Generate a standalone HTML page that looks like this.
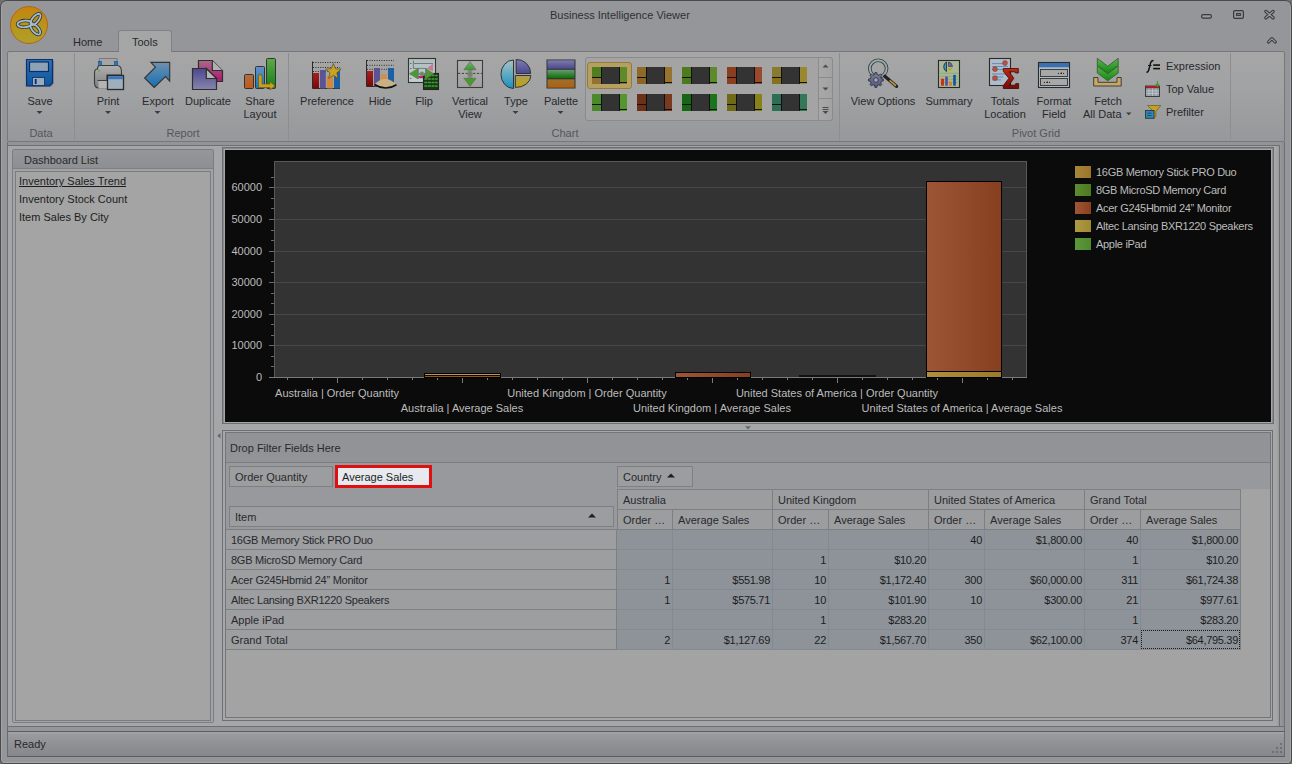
<!DOCTYPE html>
<html><head><meta charset="utf-8">
<style>
*{box-sizing:border-box;margin:0;padding:0}
html,body{width:1292px;height:764px;overflow:hidden;background:#707070}
body{font-family:"Liberation Sans",sans-serif;font-size:11px;color:#28292d;position:relative}
.a{position:absolute}
.t{position:absolute;white-space:nowrap;line-height:12px}
.c{text-align:center}
.r{text-align:right}
.lbl{color:#55565c}
svg{position:absolute;overflow:visible}
.ch{font-size:11px;color:#c9c9c9}
text.cf{font-family:"Liberation Sans",sans-serif;font-size:11px;fill:#bcbcbc}
text.lg{letter-spacing:-0.3px}
.cell{position:absolute;height:20px;line-height:19px;white-space:nowrap;overflow:hidden}
</style></head><body>
<!-- window frame -->
<div class="a" style="left:0;top:0;width:1292px;height:764px;background:#959699;border:1px solid #48494b;border-radius:7px 7px 4px 4px;box-shadow:inset 1px 0 0 #a3a4a6,inset -1px 0 0 #a3a4a6"></div>
<!-- title -->
<div class="t" style="left:550px;top:9px;color:#2f3033">Business Intelligence Viewer</div>
<!-- window buttons -->
<svg style="left:1195px;top:4px" width="90" height="46">
 <rect x="6.6" y="10.6" width="9.8" height="3.6" rx="1.6" fill="#9c9c9e" stroke="#38393c" stroke-width="1.2"/>
 <rect x="38.6" y="6.6" width="9.8" height="7.8" rx="1.3" fill="none" stroke="#38393c" stroke-width="1.2"/>
 <rect x="41.6" y="9.6" width="3.8" height="1.8" fill="none" stroke="#38393c" stroke-width="1.1"/>
 <path d="M71 7.5 L78 13.8 M78 7.5 L71 13.8" stroke="#38393c" stroke-width="3.4" stroke-linecap="round"/>
 <path d="M71 7.5 L78 13.8 M78 7.5 L71 13.8" stroke="#9c9c9e" stroke-width="1.2" stroke-linecap="round"/>
 <path d="M73.6 38 L76.9 34.6 L80.2 38" fill="none" stroke="#38393c" stroke-width="3.2" stroke-linecap="round" stroke-linejoin="round"/>
 <path d="M73.6 38 L76.9 34.6 L80.2 38" fill="none" stroke="#9c9c9e" stroke-width="1.1" stroke-linecap="round" stroke-linejoin="round"/>
</svg>
<!-- logo -->
<div class="a" style="left:10px;top:6px;width:38px;height:38px;border-radius:50%;background:linear-gradient(#c2850e,#b8961a 55%,#aea02c);border:1px solid #b8621a"></div>
<svg style="left:10px;top:6px" width="38" height="38">
 <g transform="translate(21.5 18.5) scale(0.86) translate(-20.5 -17.5)"><g fill="none" stroke="#27313c" stroke-width="4">
  <ellipse cx="12.6" cy="16.8" rx="8.4" ry="3.9" transform="rotate(-4 12.6 16.8)"/>
  <ellipse cx="25.2" cy="11.6" rx="8" ry="3.6" transform="rotate(-50 25.2 11.6)"/>
  <ellipse cx="25" cy="23" rx="7.6" ry="3.6" transform="rotate(48 25 23)"/>
 </g>
 <g fill="none" stroke="#a6bccb" stroke-width="2.1">
  <ellipse cx="12.6" cy="16.8" rx="8.4" ry="3.9" transform="rotate(-4 12.6 16.8)"/>
  <ellipse cx="25.2" cy="11.6" rx="8" ry="3.6" transform="rotate(-50 25.2 11.6)"/>
  <ellipse cx="25" cy="23" rx="7.6" ry="3.6" transform="rotate(48 25 23)"/>
 </g>
 </g>
</svg>
<!-- tabs -->
<div class="t" style="left:73px;top:36px">Home</div>
<div class="a" style="left:118px;top:30px;width:54px;height:23px;background:linear-gradient(#a4a5a6,#a6a6a6);border:1px solid #818284;border-bottom:none;border-radius:3px 3px 0 0"></div>
<div class="t" style="left:132px;top:36px">Tools</div>
<!-- ribbon panel -->
<div class="a" style="left:7px;top:51px;width:1278px;height:91px;background:linear-gradient(#a6a6a7,#a1a2a3 45%,#97989b);border:1px solid #76777b;border-radius:2px"></div>
<div class="a" style="left:119px;top:51px;width:52px;height:2px;background:#a6a6a7"></div>
<!-- group separators -->
<div class="a" style="left:74px;top:53px;width:1px;height:87px;background:#8d8e90"></div>
<div class="a" style="left:288px;top:53px;width:1px;height:87px;background:#8d8e90"></div>
<div class="a" style="left:839px;top:53px;width:1px;height:87px;background:#8d8e90"></div>
<div class="a" style="left:1230px;top:53px;width:1px;height:87px;background:#8d8e90"></div>
<!-- ribbon labels -->
<div id="rlabels">
<div class="t c" style="left:20px;top:95px;width:40px">Save</div>
<div class="t c" style="left:88px;top:95px;width:40px">Print</div>
<div class="t c" style="left:138px;top:95px;width:40px">Export</div>
<div class="t c" style="left:178px;top:95px;width:60px">Duplicate</div>
<div class="t c" style="left:235px;top:95px;width:50px;line-height:13px">Share<br>Layout</div>
<div class="t c" style="left:297px;top:95px;width:60px">Preference</div>
<div class="t c" style="left:360px;top:95px;width:40px">Hide</div>
<div class="t c" style="left:404px;top:95px;width:40px">Flip</div>
<div class="t c" style="left:445px;top:95px;width:50px;line-height:13px">Vertical<br>View</div>
<div class="t c" style="left:496px;top:95px;width:40px">Type</div>
<div class="t c" style="left:536px;top:95px;width:50px">Palette</div>
<div class="t c" style="left:843px;top:95px;width:80px">View Options</div>
<div class="t c" style="left:919px;top:95px;width:60px">Summary</div>
<div class="t c" style="left:975px;top:95px;width:60px;line-height:13px">Totals<br>Location</div>
<div class="t c" style="left:1024px;top:95px;width:60px;line-height:13px">Format<br>Field</div>
<div class="t c" style="left:1078px;top:95px;width:60px">Fetch</div>
<div class="t" style="left:1083px;top:108px">All Data</div>
<div class="t" style="left:1166px;top:60px">Expression</div>
<div class="t" style="left:1166px;top:83px">Top Value</div>
<div class="t" style="left:1166px;top:106px">Prefilter</div>
<div class="t c lbl" style="left:21px;top:127px;width:40px">Data</div>
<div class="t c lbl" style="left:153px;top:127px;width:60px">Report</div>
<div class="t c lbl" style="left:535px;top:127px;width:60px">Chart</div>
<div class="t c lbl" style="left:1000px;top:127px;width:72px">Pivot Grid</div>
</div>
<svg style="left:0;top:0" width="600" height="120">
 <g fill="#3c3d40">
  <path d="M36.5 111 h6 l-3 3 z"/><path d="M105 111 h6 l-3 3 z"/><path d="M154.5 111 h6 l-3 3 z"/>
  <path d="M512.5 111 h6 l-3 3 z"/><path d="M557.5 111 h6 l-3 3 z"/>
 </g>
</svg>
<!-- gallery -->
<div class="a" style="left:585px;top:57px;width:248px;height:64px;border:1px solid #8a8b8d;border-radius:3px;background:#a4a4a5"></div>
<div class="a" style="left:818px;top:57px;width:15px;height:64px;border:1px solid #8a8b8d;border-radius:0 3px 3px 0;background:linear-gradient(90deg,#a8a8a9,#a2a2a3)"></div>
<div class="a" style="left:819px;top:77px;width:13px;height:1px;background:#8a8b8d"></div>
<div class="a" style="left:819px;top:98px;width:13px;height:1px;background:#8a8b8d"></div>
<svg style="left:818px;top:57px" width="15" height="64" fill="#4a4b4e"><path d="M4.5 10.5 L7.5 7.5 L10.5 10.5 Z"/><path d="M4.5 30.5 L7.5 33.5 L10.5 30.5 Z"/><rect x="4.5" y="50" width="6" height="1"/><rect x="4.5" y="52" width="6" height="1"/><path d="M4.5 54 L7.5 57 L10.5 54 Z"/></svg>
<div class="a" style="left:587px;top:62px;width:45px;height:27px;border:1px solid #9a7a3a;border-radius:3px;background:#b4a060"></div>
<svg style="left:0;top:0" width="840" height="130">
<rect x="592" y="67" width="35" height="17" fill="#111"/>
<rect x="592" y="67" width="9" height="10" fill="#507e1c"/>
<rect x="592" y="78" width="9" height="6" fill="#967030"/>
<rect x="602" y="67" width="17" height="17" fill="#333"/>
<rect x="620" y="67" width="7" height="15" fill="#5e8a2c"/>
<rect x="620" y="83" width="7" height="1" fill="#967030"/>
<rect x="637" y="67" width="35" height="17" fill="#111"/>
<rect x="637" y="67" width="9" height="10" fill="#8e6a28"/>
<rect x="637" y="78" width="9" height="6" fill="#8c6620"/>
<rect x="647" y="67" width="17" height="17" fill="#333"/>
<rect x="665" y="67" width="7" height="15" fill="#967430"/>
<rect x="665" y="83" width="7" height="1" fill="#967430"/>
<rect x="682" y="67" width="35" height="17" fill="#111"/>
<rect x="682" y="67" width="9" height="10" fill="#4e7c1c"/>
<rect x="682" y="78" width="9" height="6" fill="#4c7a1a"/>
<rect x="692" y="67" width="17" height="17" fill="#333"/>
<rect x="710" y="67" width="7" height="15" fill="#5c8a2c"/>
<rect x="710" y="83" width="7" height="1" fill="#5c8a2c"/>
<rect x="727" y="67" width="35" height="17" fill="#111"/>
<rect x="727" y="67" width="9" height="10" fill="#8a3e1e"/>
<rect x="727" y="78" width="9" height="6" fill="#8a3e1e"/>
<rect x="737" y="67" width="17" height="17" fill="#333"/>
<rect x="755" y="67" width="7" height="15" fill="#9a4a2c"/>
<rect x="755" y="83" width="7" height="1" fill="#9a4a2c"/>
<rect x="772" y="67" width="35" height="17" fill="#111"/>
<rect x="772" y="67" width="9" height="10" fill="#8a7a30"/>
<rect x="772" y="78" width="9" height="6" fill="#86721e"/>
<rect x="782" y="67" width="17" height="17" fill="#333"/>
<rect x="800" y="67" width="7" height="15" fill="#9a8830"/>
<rect x="800" y="83" width="7" height="1" fill="#9a8830"/>
<rect x="592" y="94" width="35" height="17" fill="#111"/>
<rect x="592" y="94" width="9" height="10" fill="#4a8a2a"/>
<rect x="592" y="105" width="9" height="6" fill="#4a8a2a"/>
<rect x="602" y="94" width="17" height="17" fill="#333"/>
<rect x="620" y="94" width="7" height="15" fill="#56962e"/>
<rect x="620" y="110" width="7" height="1" fill="#56962e"/>
<rect x="637" y="94" width="35" height="17" fill="#111"/>
<rect x="637" y="94" width="9" height="10" fill="#6a3018"/>
<rect x="637" y="105" width="9" height="6" fill="#6a3018"/>
<rect x="647" y="94" width="17" height="17" fill="#333"/>
<rect x="665" y="94" width="7" height="15" fill="#7a3a20"/>
<rect x="665" y="110" width="7" height="1" fill="#7a3a20"/>
<rect x="682" y="94" width="35" height="17" fill="#111"/>
<rect x="682" y="94" width="9" height="10" fill="#156615"/>
<rect x="682" y="105" width="9" height="6" fill="#156615"/>
<rect x="692" y="94" width="17" height="17" fill="#333"/>
<rect x="710" y="94" width="7" height="15" fill="#1a741a"/>
<rect x="710" y="110" width="7" height="1" fill="#1a741a"/>
<rect x="727" y="94" width="35" height="17" fill="#111"/>
<rect x="727" y="94" width="9" height="10" fill="#6e6a18"/>
<rect x="727" y="105" width="9" height="6" fill="#6e6a18"/>
<rect x="737" y="94" width="17" height="17" fill="#333"/>
<rect x="755" y="94" width="7" height="15" fill="#868218"/>
<rect x="755" y="110" width="7" height="1" fill="#868218"/>
<rect x="772" y="94" width="35" height="17" fill="#111"/>
<rect x="772" y="94" width="9" height="10" fill="#2e6e54"/>
<rect x="772" y="105" width="9" height="6" fill="#2e6e54"/>
<rect x="782" y="94" width="17" height="17" fill="#333"/>
<rect x="800" y="94" width="7" height="15" fill="#337858"/>
<rect x="800" y="110" width="7" height="1" fill="#337858"/>
</svg>
<!-- icons -->
<svg style="left:0;top:0" width="1292" height="145">
<defs>
 <linearGradient id="gSaveB" x1="0" y1="0" x2="0" y2="1"><stop offset="0" stop-color="#2a74b4"/><stop offset="1" stop-color="#10549c"/></linearGradient>
 <linearGradient id="gPrn" x1="0" y1="0" x2="0" y2="1"><stop offset="0" stop-color="#b0b0b0"/><stop offset="1" stop-color="#7e7e7e"/></linearGradient>
 <linearGradient id="gExp" x1="0" y1="0" x2="0" y2="1"><stop offset="0" stop-color="#7090b0"/><stop offset="1" stop-color="#1470b0"/></linearGradient>
 <linearGradient id="gPink" x1="0" y1="0" x2="0" y2="1"><stop offset="0" stop-color="#a86a88"/><stop offset="1" stop-color="#b01470"/></linearGradient>
 <linearGradient id="gPurp" x1="0" y1="0" x2="0" y2="1"><stop offset="0" stop-color="#4a4890"/><stop offset="1" stop-color="#8884ac"/></linearGradient>
 <linearGradient id="gOr" x1="0" y1="0" x2="0" y2="1"><stop offset="0" stop-color="#b07040"/><stop offset="1" stop-color="#c05818"/></linearGradient>
 <linearGradient id="gBl" x1="0" y1="0" x2="0" y2="1"><stop offset="0" stop-color="#6890c0"/><stop offset="1" stop-color="#1478c8"/></linearGradient>
 <linearGradient id="gGr" x1="0" y1="0" x2="0" y2="1"><stop offset="0" stop-color="#60a848"/><stop offset="1" stop-color="#108018"/></linearGradient>
 <linearGradient id="gRed" x1="0" y1="0" x2="0" y2="1"><stop offset="0" stop-color="#a82020"/><stop offset="1" stop-color="#780808"/></linearGradient>
 <linearGradient id="gPieL" x1="0" y1="0" x2="0" y2="1"><stop offset="0" stop-color="#a8c4c4"/><stop offset="1" stop-color="#1890c0"/></linearGradient>
 <linearGradient id="gPieP" x1="0" y1="0" x2="0" y2="1"><stop offset="0" stop-color="#7e7cb0"/><stop offset="1" stop-color="#4a4890"/></linearGradient>
 <linearGradient id="gPieY" x1="0" y1="0" x2="0" y2="1"><stop offset="0" stop-color="#aca058"/><stop offset="1" stop-color="#c0a010"/></linearGradient>
 <linearGradient id="gPalP" x1="0" y1="0" x2="0" y2="1"><stop offset="0" stop-color="#7c7aac"/><stop offset="1" stop-color="#4c4a90"/></linearGradient>
 <linearGradient id="gPalG" x1="0" y1="0" x2="0" y2="1"><stop offset="0" stop-color="#6a9a70"/><stop offset="1" stop-color="#0a700a"/></linearGradient>
 <linearGradient id="gPalO" x1="0" y1="0" x2="0" y2="1"><stop offset="0" stop-color="#9a7030"/><stop offset="1" stop-color="#b06010"/></linearGradient>
 <linearGradient id="gArrG" x1="0" y1="0" x2="0" y2="1"><stop offset="0" stop-color="#78b070"/><stop offset="1" stop-color="#3a9a30"/></linearGradient>
 <linearGradient id="gFetch" x1="0" y1="0" x2="0" y2="1"><stop offset="0" stop-color="#60b050"/><stop offset="1" stop-color="#108a10"/></linearGradient>
</defs>
<g stroke-linejoin="miter">
 <!-- Save -->
 <path d="M28 61 h26 v23 l-3 3 h-23 z" fill="#6a6b6e" opacity="0.45"/>
 <path d="M26.5 59.5 h26 v23.5 l-3 3 h-23 z" fill="url(#gSaveB)" stroke="#0a3070" stroke-width="1.2"/>
 <rect x="29.5" y="62" width="19" height="9.5" fill="#8ea2b6" stroke="#0a2c6a" stroke-width="1.2"/>
 <rect x="32.5" y="77.5" width="12" height="8" fill="#9aabba" stroke="#0a2c6a" stroke-width="0.8"/>
 <rect x="34.8" y="79" width="1.8" height="5" fill="#0a2c6a"/>
 <!-- Print -->
 <rect x="99.5" y="58.5" width="17.5" height="7" fill="none" stroke="#7a7a7a" stroke-width="1"/>
 <path d="M97.5 69 Q94.5 69 94.5 73 V83 Q94.5 88 99 88 H107 V75 H121.5 V72 Q121.5 65.5 117 65.5 H100 Q97.5 65.5 97.5 69 Z" fill="url(#gPrn)" stroke="#3a3a3a" stroke-width="1.1"/>
 <rect x="98.5" y="61.5" width="3" height="4" fill="#2a7ab8" stroke="#1a4a80" stroke-width="0.6"/>
 <rect x="114.5" y="61.5" width="3" height="4" fill="#2a7ab8" stroke="#1a4a80" stroke-width="0.6"/>
 <circle cx="99.2" cy="70.8" r="1.1" fill="#60b040"/>
 <rect x="98.5" y="80.5" width="9" height="8" fill="#b4b4b4"/>
 <path d="M97.5 80.5 H107" stroke="#333" stroke-width="0.9"/>
 <rect x="107.5" y="75.5" width="16" height="14" fill="#9eb0c0" stroke="#2a2a2a" stroke-width="1.3"/>
 <rect x="108.2" y="76.2" width="14.6" height="3" fill="#3878b8"/>
 <!-- Export -->
 <path d="M150.9 62.4 H169.7 V81.2 L165.5 76.6 L154.2 87.4 L144.6 78 L155.4 67.2 Z" fill="url(#gExp)" stroke="#333" stroke-width="1.1"/>
 <!-- Duplicate -->
 <path d="M198.5 60.5 H212.3 L222.5 70.7 V81.5 H198.5 Z" fill="url(#gPink)" stroke="#2e2e2e" stroke-width="1.2"/>
 <path d="M212.3 60.5 V70.5 H222.5" fill="#b0b0b0" stroke="#2e2e2e" stroke-width="1.2"/>
 <path d="M192.5 68.5 H206.3 L216.5 78.5 V89.5 H192.5 Z" fill="url(#gPurp)" stroke="#2e2e2e" stroke-width="1.2"/>
 <path d="M206.3 68.5 V78.5 H216.5 Z" fill="#b4b4b4" stroke="#2e2e2e" stroke-width="1.2"/>
 <!-- Share Layout -->
 <rect x="244.5" y="74.5" width="9" height="14" rx="1" fill="url(#gOr)" stroke="#333" stroke-width="1"/>
 <rect x="255.5" y="66.5" width="9" height="22" rx="1" fill="url(#gBl)" stroke="#333" stroke-width="1"/>
 <rect x="266.5" y="58.5" width="9" height="30" rx="1" fill="url(#gGr)" stroke="#333" stroke-width="1"/>
 <path d="M258.5 75 H262 V84 H270 V81.5 L275 86 L270 90 V87.5 H258.5 Z" fill="#c8a020" stroke="#6a5a10" stroke-width="0.7"/>
 <!-- Preference -->
 <path d="M312.5 61.5 V88.5 H340" stroke="#2a2a2a" stroke-width="1" fill="none"/>
 <path d="M313 62.5 H340 M313 67.5 H340 M313 71.5 H340" stroke="#2a2a2a" stroke-width="1" stroke-dasharray="1 1.4" fill="none"/>
 <rect x="313" y="73" width="6" height="15.5" fill="url(#gRed)"/>
 <rect x="320" y="70" width="5.8" height="18.5" fill="#5a5494"/>
 <rect x="327" y="76" width="6" height="12.5" fill="#d08838"/>
 <rect x="334" y="71.5" width="6" height="17" fill="#1a60a4"/>
 <path d="M333.4 63.6 L335.5 68.8 L341.2 69.2 L336.8 72.8 L338.2 78.4 L333.4 75.3 L328.6 78.4 L330 72.8 L325.6 69.2 L331.3 68.8 Z" fill="#c8a420" stroke="#5a5020" stroke-width="0.7"/>
 <!-- Hide -->
 <path d="M366.5 60 V86.5 H394" stroke="#2a2a2a" stroke-width="1" fill="none"/>
 <path d="M367 60.5 H394 M367 65.3 H394 M367 69.3 H394" stroke="#2a2a2a" stroke-width="1" stroke-dasharray="1 1.4" fill="none"/>
 <rect x="367" y="71" width="6" height="15.5" fill="url(#gRed)"/>
 <rect x="374" y="68" width="6" height="18.5" fill="#5a5494"/>
 <rect x="381" y="74" width="6" height="12.5" fill="#d09048"/>
 <rect x="388" y="68" width="6" height="18.5" fill="#1a60a4"/>
 <path d="M374.5 84.2 Q385.6 73.5 396.5 84.7 Q385.6 92 374.5 84.2 Z" fill="#c8b084"/>
 <path d="M374.5 84.5 Q385.6 91.5 396.5 84.7" stroke="#111" stroke-width="1.6" fill="none"/>
 <!-- Flip -->
 <defs><linearGradient id="gFlipBg" x1="0" y1="0" x2="0" y2="1"><stop offset="0" stop-color="#aebebe"/><stop offset="1" stop-color="#c2d2d2"/></linearGradient></defs>
 <rect x="408.5" y="58.5" width="27" height="24" fill="url(#gFlipBg)" stroke="#333" stroke-width="1.1"/>
 <path d="M413.4 60.5 V69 M414 63.5 H433 M414 68.4 H426" stroke="#666" stroke-width="0.8" fill="none"/>
 <path d="M410 63.5 h1.5 M410 68.5 h1.5 M410 78.5 h1.5" stroke="#555" stroke-width="0.8"/>
 <path d="M426.8 68.4 L433 63.5 V71.6 Z" fill="#c8789a"/>
 <rect x="417.7" y="76" width="6" height="2.2" fill="#c02060"/>
 <rect x="423.5" y="73.5" width="15" height="16" fill="#143c14" stroke="#222" stroke-width="1.1"/>
 <path d="M424.3 75.6 H437.7 M424.3 79 H437.7 M424.3 82.4 H437.7 M424.3 85.9 H437.7" stroke="#4a9a3a" stroke-width="1.5" stroke-dasharray="3 0.6"/>
 <path d="M418 68.6 V74 H426 V68.6" fill="none" stroke="#808080" stroke-width="1.6"/>
 <path d="M418 79 V74 H426 V79" fill="none" stroke="#808080" stroke-width="1.6"/>
 <path d="M409.3 73.7 L417.9 68.5 V79 Z" fill="#4c9a2e" stroke="#666" stroke-width="0.5"/>
 <path d="M433.8 73.7 L425.9 68.5 V79 Z" fill="#4c9a2e" stroke="#666" stroke-width="0.5"/>
 <circle cx="421.9" cy="73.9" r="1.9" fill="#4c9a2e" stroke="#8a8a8a" stroke-width="1.1"/>
 <!-- Vertical View -->
 <defs><linearGradient id="gVV" x1="0" y1="0" x2="0" y2="1"><stop offset="0" stop-color="#b0b0b0"/><stop offset="1" stop-color="#a0a0a0"/></linearGradient></defs>
 <rect x="457.5" y="60.5" width="25" height="27" fill="url(#gVV)" stroke="#3c3c3c" stroke-width="1.1"/>
 <path d="M458 73.4 H482" stroke="#3c3c3c" stroke-width="1" stroke-dasharray="2.2 1.6"/>
 <rect x="467.6" y="69" width="4.8" height="10" fill="#8a8a8a"/>
 <path d="M470 61.3 L476.2 69.8 H463.8 Z" fill="url(#gArrG)" stroke="#555" stroke-width="0.4"/>
 <path d="M470 86.4 L476.2 78.3 H463.8 Z" fill="#4a9a2c" stroke="#555" stroke-width="0.4"/>
 <circle cx="470" cy="73.9" r="2" fill="#4a9a2c" stroke="#808080" stroke-width="1.2"/>
 <!-- Type pie -->
 <path d="M513.5 60 A12.5 14.2 0 0 0 513.5 88.5 Z" fill="url(#gPieL)" stroke="#333" stroke-width="1"/>
 <path d="M516.2 59.5 A14 14 0 0 1 530.7 73.5 H516.2 Z" fill="url(#gPieP)" stroke="#333" stroke-width="1"/>
 <path d="M515.3 75.5 H530.9 A15 12 0 0 1 515.3 87.4 Z" fill="url(#gPieY)" stroke="#333" stroke-width="1"/>
 <!-- Palette -->
 <rect x="546.5" y="59.5" width="29" height="29" fill="#333"/>
 <rect x="547.5" y="60.3" width="27" height="8.4" fill="url(#gPalP)"/>
 <rect x="547.5" y="69.8" width="27" height="8.4" fill="url(#gPalG)"/>
 <rect x="547.5" y="79.3" width="27" height="8.4" fill="url(#gPalO)"/>
 <!-- View Options -->
 <circle cx="878.2" cy="68.6" r="8.4" fill="none" stroke="#3a3c40" stroke-width="3.6"/>
 <circle cx="878.2" cy="68.6" r="8.4" fill="none" stroke="#98aeae" stroke-width="1.9"/>
 <path d="M884.8 76.3 L896.5 86.3" stroke="#222" stroke-width="3.4" stroke-linecap="round"/>
 <path d="M889.6 80.4 L896 85.8" stroke="#b89238" stroke-width="1.8"/>
 <defs><linearGradient id="gGear" x1="0" y1="0" x2="0" y2="1"><stop offset="0" stop-color="#7c7e9a"/><stop offset="1" stop-color="#56588a"/></linearGradient></defs>
 <path d="M881.37 78.80 L883.24 79.04 L883.24 80.96 L881.37 81.20 L881.07 82.14 L880.62 83.02 L881.76 84.51 L880.41 85.86 L878.92 84.72 L878.04 85.17 L877.10 85.47 L876.86 87.34 L874.94 87.34 L874.70 85.47 L873.76 85.17 L872.88 84.72 L871.39 85.86 L870.04 84.51 L871.18 83.02 L870.73 82.14 L870.43 81.20 L868.56 80.96 L868.56 79.04 L870.43 78.80 L870.73 77.86 L871.18 76.98 L870.04 75.49 L871.39 74.14 L872.88 75.28 L873.76 74.83 L874.70 74.53 L874.94 72.66 L876.86 72.66 L877.10 74.53 L878.04 74.83 L878.92 75.28 L880.41 74.14 L881.76 75.49 L880.62 76.98 L881.07 77.86 Z" fill="url(#gGear)" stroke="#2e2f36" stroke-width="0.9"/>
 <circle cx="875.9" cy="80.0" r="2.3" fill="#a5a6a7" stroke="#2e2f36" stroke-width="0.8"/>
 <!-- Summary -->
 <rect x="938.5" y="60.5" width="21" height="27" fill="#a8b898" stroke="#2a2a2a" stroke-width="1.1"/>
 <path d="M946.5 62 A4 5 0 0 0 946.5 71.5 Z" fill="#3a9ab8" stroke="#222" stroke-width="0.8"/>
 <path d="M948.5 62 A5 5 0 0 1 952.5 66.5 H948.5 Z" fill="#6a68a8" stroke="#222" stroke-width="0.5"/>
 <path d="M948.5 68 H952.5 A5 5 0 0 1 948.5 71 Z" fill="#c0a020"/>
 <path d="M940 73.3 H958 M940 76.3 H958 M940 79.3 H958 M940 82.3 H958" stroke="#78a060" stroke-width="0.6"/>
 <rect x="941" y="78.7" width="3" height="7" fill="#d03010"/>
 <rect x="945.2" y="76.6" width="2.6" height="9.1" fill="#5a4a9a"/>
 <rect x="949" y="81.7" width="3" height="4" fill="#e08020"/>
 <rect x="953.2" y="74.9" width="2.6" height="10.8" fill="#1050a0"/>
 <!-- Totals Location -->
 <rect x="989.5" y="58.5" width="21" height="27" fill="#b0bcc8" stroke="#2a2a2a" stroke-width="1.1"/>
 <path d="M992 63.6 H1006 M992 66.5 H1008 M992 69.4 H1004 M992 74 H1006 M992 77 H1003 M992 79.9 H1001" stroke="#3a78b8" stroke-width="0.7"/>
 <circle cx="1005" cy="63" r="2.4" fill="#c05040" stroke="#6a2a2a" stroke-width="0.5"/>
 <circle cx="995" cy="69.2" r="2.4" fill="#c05040" stroke="#6a2a2a" stroke-width="0.5"/>
 <circle cx="995" cy="78.1" r="2.4" fill="#c05040" stroke="#6a2a2a" stroke-width="0.5"/>
 <defs><linearGradient id="gSig" x1="0" y1="0" x2="0" y2="1"><stop offset="0" stop-color="#c02a12"/><stop offset="1" stop-color="#760808"/></linearGradient></defs>
 <path d="M1003.3 68.5 H1018.3 V73 H1015.6 L1014.9 71.8 H1009.3 L1013.8 78.3 L1009 85.2 H1015 L1015.8 83.6 H1018.6 V88.5 H1003.3 V85.6 L1008.9 78.3 L1003.3 71.3 Z" fill="url(#gSig)" stroke="#3a0808" stroke-width="0.8"/>
 <!-- Format Field -->
 <rect x="1038.5" y="62.5" width="31" height="25" fill="#b0bcc8" stroke="#2a2a2a" stroke-width="1.1"/>
 <rect x="1039" y="63" width="30" height="4.3" fill="#3a70b0"/>
 <rect x="1040.5" y="69.5" width="27" height="7" fill="#a8a8a8" stroke="#333" stroke-width="0.9"/>
 <rect x="1040.5" y="78.5" width="27" height="7" fill="#a8a8a8" stroke="#333" stroke-width="0.9"/>
 <path d="M1057.5 74 h1.5 v-1.5 z M1060 74 h2 v-1.5 h-1 z M1063 74 h1.5 l-1.5 -1.5 z M1043.5 83 h1.5 v-1.5 z M1046 83 h2 v-1.5 h-1 z M1049 83 h1.5 l-1.5 -1.5 z" fill="#222"/>
 <!-- Fetch All Data -->
 <path d="M1097.3 66 L1107.7 73.8 L1118.2 66 V73 L1107.7 80.8 L1097.3 73 Z" fill="url(#gFetch)" stroke="#2f5a28" stroke-width="0.8"/>
 <path d="M1097.3 58.3 L1107.7 66.2 L1118.2 58.3 V65.4 L1107.7 73.2 L1097.3 65.4 Z" fill="url(#gFetch)" stroke="#2f5a28" stroke-width="0.8"/>
 <path d="M1093.7 77.5 H1098 V82.3 H1117 V77.5 H1121.2 V86 H1093.7 Z" fill="#c8a860" stroke="#333" stroke-width="0.9"/>
 <path d="M1126 112.5 h5.5 l-2.75 2.75 z" fill="#3c3d40"/>
 <!-- Expression -->
 <path d="M1146.5 72.5 Q1148.5 72 1149.3 68 L1150.7 62.5 Q1151.5 60.5 1153.5 60.5" stroke="#111" stroke-width="1.4" fill="none"/>
 <path d="M1148 65.5 H1151.5" stroke="#111" stroke-width="1"/>
 <rect x="1153.2" y="64.3" width="6.8" height="1.6" fill="#111"/>
 <rect x="1153.2" y="67.8" width="6.8" height="1.6" fill="#111"/>
 <!-- Top Value -->
 <rect x="1145.5" y="86" width="14" height="10.5" fill="#8f9ca8" stroke="#333" stroke-width="0.9"/>
 <rect x="1146" y="86.2" width="13" height="2" fill="#b01818"/>
 <path d="M1149 88.5 V96 M1152.5 88.5 V96 M1156 88.5 V96 M1146 91 H1159 M1146 93.5 H1159" stroke="#c8ccd0" stroke-width="0.7"/>
 <path d="M1157.4 81 V85 M1155.7 83.8 L1157.4 86.2 L1159.1 83.8" stroke="#3a9a30" stroke-width="1.1" fill="none"/>
 <!-- Prefilter -->
 <path d="M1147.5 105.5 H1160.8 L1155.8 111.5 V116.8 L1153.6 118 V111.5 Z" fill="#c8a020" stroke="#5a5020" stroke-width="0.6"/>
 <rect x="1145.5" y="110.5" width="8.5" height="7.8" fill="#2a8ab8" stroke="#333" stroke-width="0.9"/>
 <path d="M1147.3 113.2 H1151.5 M1147.3 115.5 H1151.5" stroke="#1a3a5a" stroke-width="0.8"/>
</g>
</svg>
<!-- content area -->
<div class="a" style="left:7px;top:142px;width:1278px;height:585px;background:#939497;border:1px solid #6e6f73;border-top:none"></div>
<div class="a" style="left:8px;top:145px;width:1272px;height:581px;background:#a5a6a7;border-top:1px solid #6e6f73;border-right:1px solid #6e6f73"></div>
<div class="a" style="left:1274px;top:146px;width:5px;height:580px;background:linear-gradient(90deg,#a9a9aa,#a4a4a5 60%,#98999b)"></div>
<div class="a" style="left:1280px;top:142px;width:4px;height:584px;background:linear-gradient(90deg,#97989a,#8c8d90)"></div>
<!-- dashboard list panel -->
<div class="a" style="left:12px;top:149px;width:202px;height:574px;border:1px solid #7c7d80;border-radius:2px;background:#a2a3a4"></div>
<div class="a" style="left:13px;top:150px;width:200px;height:19px;background:linear-gradient(#95969a,#8e8f93);border-bottom:1px solid #7f8084"></div>
<div class="t" style="left:24px;top:154px">Dashboard List</div>
<div class="a" style="left:15px;top:171px;width:196px;height:550px;border:1px solid #7b7c80;background:#a4a4a5"></div>
<div class="t" style="left:19px;top:175px;text-decoration:underline;color:#1c1d20">Inventory Sales Trend</div>
<div class="t" style="left:19px;top:193px;color:#1c1d20">Inventory Stock Count</div>
<div class="t" style="left:19px;top:211px;color:#1c1d20">Item Sales By City</div>
<svg style="left:216px;top:432px" width="6" height="8"><path d="M4.5 1 L4.5 6.5 L1.2 3.75 Z" fill="#65676c"/></svg>
<svg style="left:744px;top:425px" width="8" height="6"><path d="M1 1.2 L7 1.2 L4 4.5 Z" fill="#65676c"/></svg>
<!-- chart -->
<div class="a" style="left:222px;top:147px;width:1052px;height:277px;border:1px solid #6c6e72;background:#a6a7a9;box-shadow:inset 1px 1px 0 #8a8b8f,inset -1px 0 0 #8a8b8f"></div>
<svg style="left:225px;top:150px" width="1046" height="272">
<defs>
<linearGradient id="gAcer" x1="0" x2="1" y1="0" y2="0"><stop offset="0" stop-color="#9c5636"/><stop offset="1" stop-color="#873f20"/></linearGradient>
<linearGradient id="gAlt" x1="0" x2="1" y1="0" y2="0"><stop offset="0" stop-color="#ad8f3f"/><stop offset="1" stop-color="#9a7b2c"/></linearGradient>
<linearGradient id="l1" x1="0" x2="1"><stop offset="0" stop-color="#a8853e"/><stop offset="1" stop-color="#9b7428"/></linearGradient>
<linearGradient id="l2" x1="0" x2="1"><stop offset="0" stop-color="#5e8a34"/><stop offset="1" stop-color="#4c7a1c"/></linearGradient>
<linearGradient id="l3" x1="0" x2="1"><stop offset="0" stop-color="#9d5636"/><stop offset="1" stop-color="#8a401f"/></linearGradient>
<linearGradient id="l4" x1="0" x2="1"><stop offset="0" stop-color="#ae9a44"/><stop offset="1" stop-color="#9f8a30"/></linearGradient>
<linearGradient id="l5" x1="0" x2="1"><stop offset="0" stop-color="#5c963e"/><stop offset="1" stop-color="#4e8a2e"/></linearGradient>
</defs>
<rect x="0" y="0" width="1046" height="272" fill="#0b0b0b"/>
<rect x="49.5" y="11.5" width="752" height="216" fill="#333333" stroke="#585858" stroke-width="1"/>
<rect x="50" y="195" width="751" height="1" fill="#474747"/>
<rect x="50" y="164" width="751" height="1" fill="#474747"/>
<rect x="50" y="132" width="751" height="1" fill="#474747"/>
<rect x="50" y="101" width="751" height="1" fill="#474747"/>
<rect x="50" y="69" width="751" height="1" fill="#474747"/>
<rect x="50" y="37" width="751" height="1" fill="#474747"/>
<rect x="44" y="227" width="5" height="1" fill="#6b6b6b"/>
<rect x="44" y="195" width="5" height="1" fill="#6b6b6b"/>
<rect x="44" y="164" width="5" height="1" fill="#6b6b6b"/>
<rect x="44" y="132" width="5" height="1" fill="#6b6b6b"/>
<rect x="44" y="101" width="5" height="1" fill="#6b6b6b"/>
<rect x="44" y="69" width="5" height="1" fill="#6b6b6b"/>
<rect x="44" y="37" width="5" height="1" fill="#6b6b6b"/>
<rect x="46" y="216" width="3" height="1" fill="#6b6b6b"/>
<rect x="46" y="206" width="3" height="1" fill="#6b6b6b"/>
<rect x="46" y="185" width="3" height="1" fill="#6b6b6b"/>
<rect x="46" y="174" width="3" height="1" fill="#6b6b6b"/>
<rect x="46" y="153" width="3" height="1" fill="#6b6b6b"/>
<rect x="46" y="143" width="3" height="1" fill="#6b6b6b"/>
<rect x="46" y="122" width="3" height="1" fill="#6b6b6b"/>
<rect x="46" y="111" width="3" height="1" fill="#6b6b6b"/>
<rect x="46" y="90" width="3" height="1" fill="#6b6b6b"/>
<rect x="46" y="80" width="3" height="1" fill="#6b6b6b"/>
<rect x="46" y="58" width="3" height="1" fill="#6b6b6b"/>
<rect x="46" y="48" width="3" height="1" fill="#6b6b6b"/>
<rect x="46" y="27" width="3" height="1" fill="#6b6b6b"/>
<rect x="44" y="227" width="758" height="1" fill="#7a7a7a"/>
<rect x="62" y="228" width="1" height="2" fill="#7a7a7a"/>
<rect x="87" y="228" width="1" height="2" fill="#7a7a7a"/>
<rect x="112" y="228" width="1" height="5" fill="#7a7a7a"/>
<rect x="137" y="228" width="1" height="2" fill="#7a7a7a"/>
<rect x="162" y="228" width="1" height="2" fill="#7a7a7a"/>
<rect x="187" y="228" width="1" height="2" fill="#7a7a7a"/>
<rect x="212" y="228" width="1" height="2" fill="#7a7a7a"/>
<rect x="237" y="228" width="1" height="5" fill="#7a7a7a"/>
<rect x="262" y="228" width="1" height="2" fill="#7a7a7a"/>
<rect x="287" y="228" width="1" height="2" fill="#7a7a7a"/>
<rect x="312" y="228" width="1" height="2" fill="#7a7a7a"/>
<rect x="337" y="228" width="1" height="2" fill="#7a7a7a"/>
<rect x="362" y="228" width="1" height="5" fill="#7a7a7a"/>
<rect x="387" y="228" width="1" height="2" fill="#7a7a7a"/>
<rect x="412" y="228" width="1" height="2" fill="#7a7a7a"/>
<rect x="437" y="228" width="1" height="2" fill="#7a7a7a"/>
<rect x="462" y="228" width="1" height="2" fill="#7a7a7a"/>
<rect x="487" y="228" width="1" height="5" fill="#7a7a7a"/>
<rect x="512" y="228" width="1" height="2" fill="#7a7a7a"/>
<rect x="537" y="228" width="1" height="2" fill="#7a7a7a"/>
<rect x="562" y="228" width="1" height="2" fill="#7a7a7a"/>
<rect x="587" y="228" width="1" height="2" fill="#7a7a7a"/>
<rect x="612" y="228" width="1" height="5" fill="#7a7a7a"/>
<rect x="637" y="228" width="1" height="2" fill="#7a7a7a"/>
<rect x="662" y="228" width="1" height="2" fill="#7a7a7a"/>
<rect x="687" y="228" width="1" height="2" fill="#7a7a7a"/>
<rect x="712" y="228" width="1" height="2" fill="#7a7a7a"/>
<rect x="737" y="228" width="1" height="5" fill="#7a7a7a"/>
<rect x="762" y="228" width="1" height="2" fill="#7a7a7a"/>
<rect x="787" y="228" width="1" height="2" fill="#7a7a7a"/>
<text x="37" y="231" text-anchor="end" class="cf">0</text>
<text x="37" y="199" text-anchor="end" class="cf">10000</text>
<text x="37" y="168" text-anchor="end" class="cf">20000</text>
<text x="37" y="136" text-anchor="end" class="cf">30000</text>
<text x="37" y="105" text-anchor="end" class="cf">40000</text>
<text x="37" y="73" text-anchor="end" class="cf">50000</text>
<text x="37" y="41" text-anchor="end" class="cf">60000</text>
<rect x="199.5" y="223.5" width="76" height="4" fill="#0b0b0b" stroke="#000" stroke-width="1"/><rect x="200" y="224" width="75" height="1" fill="#b79a3f"/><rect x="200" y="226" width="75" height="1" fill="#9a4f2c"/>
<rect x="450.5" y="222.5" width="75" height="5" fill="#0b0b0b" stroke="#000" stroke-width="1"/><rect x="451" y="223" width="74" height="4" fill="url(#gAcer)"/>
<rect x="574" y="225" width="77" height="2" fill="#111"/>
<rect x="701.5" y="31.5" width="75" height="196" fill="#0b0b0b" stroke="#000" stroke-width="1"/><rect x="702" y="32" width="74" height="189" fill="url(#gAcer)"/><rect x="702" y="221" width="74" height="1" fill="#000"/><rect x="702" y="222" width="74" height="5" fill="url(#gAlt)"/>
<rect x="850" y="16" width="16" height="12" fill="url(#l1)"/>
<text x="871" y="26" class="cf lg">16GB Memory Stick PRO Duo</text>
<rect x="850" y="34" width="16" height="12" fill="url(#l2)"/>
<text x="871" y="44" class="cf lg">8GB MicroSD Memory Card</text>
<rect x="850" y="52" width="16" height="12" fill="url(#l3)"/>
<text x="871" y="62" class="cf lg">Acer G245Hbmid 24” Monitor</text>
<rect x="850" y="70" width="16" height="12" fill="url(#l4)"/>
<text x="871" y="80" class="cf lg">Altec Lansing BXR1220 Speakers</text>
<rect x="850" y="88" width="16" height="12" fill="url(#l5)"/>
<text x="871" y="98" class="cf lg">Apple iPad</text>
<text x="112" y="247" class="cf" text-anchor="middle">Australia | Order Quantity</text>
<text x="237" y="262" class="cf" text-anchor="middle">Australia | Average Sales</text>
<text x="362" y="247" class="cf" text-anchor="middle">United Kingdom | Order Quantity</text>
<text x="487" y="262" class="cf" text-anchor="middle">United Kingdom | Average Sales</text>
<text x="612" y="247" class="cf" text-anchor="middle">United States of America | Order Quantity</text>
<text x="737" y="262" class="cf" text-anchor="middle">United States of America | Average Sales</text>
</svg>
<!-- pivot -->
<div class="a" style="left:222px;top:430px;width:1051px;height:291px;border:1px solid #6e6f73;background:#a6a7a9"></div>
<div class="a" style="left:225px;top:432px;width:1046px;height:286px;border:1px solid #74757a;background:#a3a3a4"></div>
<div class="a" style="left:226px;top:433px;width:1044px;height:30px;background:#929397;border-bottom:1px solid #7b7c80"></div>
<div class="t" style="left:230px;top:442px">Drop Filter Fields Here</div>
<div class="a" style="left:226px;top:463px;width:1044px;height:26px;background:#98999c"></div>
<div class="a" style="left:226px;top:489px;width:391px;height:41px;background:#98999c"></div>
<div class="a" style="left:229px;top:466px;width:104px;height:21px;border:1px solid #7e7f83;background:#9c9d9f"></div>
<div class="t" style="left:235px;top:471px">Order Quantity</div>
<div class="a" style="left:335px;top:465px;width:97px;height:23px;border:3px solid #e01010;background:#e6e9ee"></div>
<div class="t" style="left:342px;top:471px;color:#1e1f22">Average Sales</div>
<div class="a" style="left:229px;top:506px;width:385px;height:21px;border:1px solid #7e7f83;background:#9c9d9f"></div>
<div class="t" style="left:235px;top:511px">Item</div>
<svg style="left:588px;top:513px" width="9" height="5"><path d="M0 4.5 L4 0.5 L8 4.5 Z" fill="#1e1f22"/></svg>
<div class="a" style="left:617px;top:466px;width:76px;height:21px;border:1px solid #7e7f83;background:#9c9d9f"></div>
<div class="t" style="left:623px;top:471px">Country</div>
<svg style="left:667px;top:473px" width="9" height="5"><path d="M0 4.5 L4 0.5 L8 4.5 Z" fill="#1e1f22"/></svg>
<div class="a" style="left:617px;top:489px;width:624px;height:41px;background:#9c9d9f;border:1px solid #7e7f83"></div>
<div class="t" style="left:623px;top:494px">Australia</div>
<div class="a" style="left:672px;top:509px;width:1px;height:21px;background:#7e7f83"></div>
<div class="t" style="left:623px;top:514px">Order …</div>
<div class="t" style="left:678px;top:514px">Average Sales</div>
<div class="t" style="left:778px;top:494px">United Kingdom</div>
<div class="a" style="left:772px;top:489px;width:1px;height:41px;background:#7e7f83"></div>
<div class="a" style="left:828px;top:509px;width:1px;height:21px;background:#7e7f83"></div>
<div class="t" style="left:778px;top:514px">Order …</div>
<div class="t" style="left:834px;top:514px">Average Sales</div>
<div class="t" style="left:934px;top:494px">United States of America</div>
<div class="a" style="left:928px;top:489px;width:1px;height:41px;background:#7e7f83"></div>
<div class="a" style="left:984px;top:509px;width:1px;height:21px;background:#7e7f83"></div>
<div class="t" style="left:934px;top:514px">Order …</div>
<div class="t" style="left:990px;top:514px">Average Sales</div>
<div class="t" style="left:1090px;top:494px">Grand Total</div>
<div class="a" style="left:1084px;top:489px;width:1px;height:41px;background:#7e7f83"></div>
<div class="a" style="left:1140px;top:509px;width:1px;height:21px;background:#7e7f83"></div>
<div class="t" style="left:1090px;top:514px">Order …</div>
<div class="t" style="left:1146px;top:514px">Average Sales</div>
<div class="a" style="left:617px;top:509px;width:624px;height:1px;background:#7e7f83"></div>
<div class="a" style="left:226px;top:529px;width:391px;height:121px;background:#9d9ea0;border-top:1px solid #7e7f83;border-right:1px solid #7e7f83"></div>
<div class="a" style="left:617px;top:530px;width:624px;height:120px;background:#8e939a"></div>
<div class="a" style="left:226px;top:549px;width:391px;height:1px;background:#7e7f83"></div>
<div class="a" style="left:617px;top:549px;width:624px;height:1px;background:#858a91"></div>
<div class="t" style="left:231px;top:534px;letter-spacing:-0.25px">16GB Memory Stick PRO Duo</div>
<div class="t r" style="left:928px;top:534px;width:54px;color:#1c1d20;letter-spacing:-0.3px">40</div>
<div class="t r" style="left:984px;top:534px;width:98px;color:#1c1d20;letter-spacing:-0.3px">$1,800.00</div>
<div class="t r" style="left:1084px;top:534px;width:54px;color:#1c1d20;letter-spacing:-0.3px">40</div>
<div class="t r" style="left:1140px;top:534px;width:98px;color:#1c1d20;letter-spacing:-0.3px">$1,800.00</div>
<div class="a" style="left:226px;top:569px;width:391px;height:1px;background:#7e7f83"></div>
<div class="a" style="left:617px;top:569px;width:624px;height:1px;background:#858a91"></div>
<div class="t" style="left:231px;top:554px;letter-spacing:-0.25px">8GB MicroSD Memory Card</div>
<div class="t r" style="left:772px;top:554px;width:54px;color:#1c1d20;letter-spacing:-0.3px">1</div>
<div class="t r" style="left:828px;top:554px;width:98px;color:#1c1d20;letter-spacing:-0.3px">$10.20</div>
<div class="t r" style="left:1084px;top:554px;width:54px;color:#1c1d20;letter-spacing:-0.3px">1</div>
<div class="t r" style="left:1140px;top:554px;width:98px;color:#1c1d20;letter-spacing:-0.3px">$10.20</div>
<div class="a" style="left:226px;top:589px;width:391px;height:1px;background:#7e7f83"></div>
<div class="a" style="left:617px;top:589px;width:624px;height:1px;background:#858a91"></div>
<div class="t" style="left:231px;top:574px;letter-spacing:-0.25px">Acer G245Hbmid 24” Monitor</div>
<div class="t r" style="left:617px;top:574px;width:53px;color:#1c1d20;letter-spacing:-0.3px">1</div>
<div class="t r" style="left:672px;top:574px;width:98px;color:#1c1d20;letter-spacing:-0.3px">$551.98</div>
<div class="t r" style="left:772px;top:574px;width:54px;color:#1c1d20;letter-spacing:-0.3px">10</div>
<div class="t r" style="left:828px;top:574px;width:98px;color:#1c1d20;letter-spacing:-0.3px">$1,172.40</div>
<div class="t r" style="left:928px;top:574px;width:54px;color:#1c1d20;letter-spacing:-0.3px">300</div>
<div class="t r" style="left:984px;top:574px;width:98px;color:#1c1d20;letter-spacing:-0.3px">$60,000.00</div>
<div class="t r" style="left:1084px;top:574px;width:54px;color:#1c1d20;letter-spacing:-0.3px">311</div>
<div class="t r" style="left:1140px;top:574px;width:98px;color:#1c1d20;letter-spacing:-0.3px">$61,724.38</div>
<div class="a" style="left:226px;top:609px;width:391px;height:1px;background:#7e7f83"></div>
<div class="a" style="left:617px;top:609px;width:624px;height:1px;background:#858a91"></div>
<div class="t" style="left:231px;top:594px;letter-spacing:-0.25px">Altec Lansing BXR1220 Speakers</div>
<div class="t r" style="left:617px;top:594px;width:53px;color:#1c1d20;letter-spacing:-0.3px">1</div>
<div class="t r" style="left:672px;top:594px;width:98px;color:#1c1d20;letter-spacing:-0.3px">$575.71</div>
<div class="t r" style="left:772px;top:594px;width:54px;color:#1c1d20;letter-spacing:-0.3px">10</div>
<div class="t r" style="left:828px;top:594px;width:98px;color:#1c1d20;letter-spacing:-0.3px">$101.90</div>
<div class="t r" style="left:928px;top:594px;width:54px;color:#1c1d20;letter-spacing:-0.3px">10</div>
<div class="t r" style="left:984px;top:594px;width:98px;color:#1c1d20;letter-spacing:-0.3px">$300.00</div>
<div class="t r" style="left:1084px;top:594px;width:54px;color:#1c1d20;letter-spacing:-0.3px">21</div>
<div class="t r" style="left:1140px;top:594px;width:98px;color:#1c1d20;letter-spacing:-0.3px">$977.61</div>
<div class="a" style="left:226px;top:629px;width:391px;height:1px;background:#7e7f83"></div>
<div class="a" style="left:617px;top:629px;width:624px;height:1px;background:#858a91"></div>
<div class="t" style="left:231px;top:614px;">Apple iPad</div>
<div class="t r" style="left:772px;top:614px;width:54px;color:#1c1d20;letter-spacing:-0.3px">1</div>
<div class="t r" style="left:828px;top:614px;width:98px;color:#1c1d20;letter-spacing:-0.3px">$283.20</div>
<div class="t r" style="left:1084px;top:614px;width:54px;color:#1c1d20;letter-spacing:-0.3px">1</div>
<div class="t r" style="left:1140px;top:614px;width:98px;color:#1c1d20;letter-spacing:-0.3px">$283.20</div>
<div class="a" style="left:226px;top:649px;width:391px;height:1px;background:#7e7f83"></div>
<div class="a" style="left:617px;top:649px;width:624px;height:1px;background:#858a91"></div>
<div class="t" style="left:231px;top:634px;">Grand Total</div>
<div class="t r" style="left:617px;top:634px;width:53px;color:#1c1d20;letter-spacing:-0.3px">2</div>
<div class="t r" style="left:672px;top:634px;width:98px;color:#1c1d20;letter-spacing:-0.3px">$1,127.69</div>
<div class="t r" style="left:772px;top:634px;width:54px;color:#1c1d20;letter-spacing:-0.3px">22</div>
<div class="t r" style="left:828px;top:634px;width:98px;color:#1c1d20;letter-spacing:-0.3px">$1,567.70</div>
<div class="t r" style="left:928px;top:634px;width:54px;color:#1c1d20;letter-spacing:-0.3px">350</div>
<div class="t r" style="left:984px;top:634px;width:98px;color:#1c1d20;letter-spacing:-0.3px">$62,100.00</div>
<div class="t r" style="left:1084px;top:634px;width:54px;color:#1c1d20;letter-spacing:-0.3px">374</div>
<div class="t r" style="left:1140px;top:634px;width:98px;color:#1c1d20;letter-spacing:-0.3px">$64,795.39</div>
<div class="a" style="left:672px;top:530px;width:1px;height:120px;background:#858a91"></div>
<div class="a" style="left:772px;top:530px;width:1px;height:120px;background:#858a91"></div>
<div class="a" style="left:828px;top:530px;width:1px;height:120px;background:#858a91"></div>
<div class="a" style="left:928px;top:530px;width:1px;height:120px;background:#858a91"></div>
<div class="a" style="left:984px;top:530px;width:1px;height:120px;background:#858a91"></div>
<div class="a" style="left:1084px;top:530px;width:1px;height:120px;background:#858a91"></div>
<div class="a" style="left:1140px;top:530px;width:1px;height:120px;background:#858a91"></div>
<div class="a" style="left:1240px;top:530px;width:1px;height:120px;background:#7e7f83"></div>
<div class="a" style="left:1141px;top:630px;width:99px;height:19px;border:1px dotted #1a1a1a"></div>
<!-- status bar -->
<div class="a" style="left:7px;top:731px;width:1278px;height:26px;background:linear-gradient(#a2a3a5 0px,#a2a3a5 1px,#9a9b9e 2px,#909194 50%,#86878a);border-top:1px solid #5c5d61;border-bottom:1px solid #5c5d61;border-right:1px solid #6a6b6f;border-left:1px solid #6a6b6f"></div>
<div class="t" style="left:14px;top:738px">Ready</div>
<div class="a" style="left:7px;top:727px;width:1px;height:4px;background:#6a6b6f"></div>
<div class="a" style="left:1284px;top:727px;width:1px;height:4px;background:#6a6b6f"></div>
<div class="a" style="left:3px;top:762px;width:1286px;height:1px;background:#a5a6a8"></div>
<svg style="left:1272px;top:743px" width="12" height="12" fill="#6e6f73">
 <rect x="8" y="0" width="2" height="2"/><rect x="4" y="4" width="2" height="2"/><rect x="8" y="4" width="2" height="2"/>
 <rect x="0" y="8" width="2" height="2"/><rect x="4" y="8" width="2" height="2"/><rect x="8" y="8" width="2" height="2"/>
</svg>
</body></html>
